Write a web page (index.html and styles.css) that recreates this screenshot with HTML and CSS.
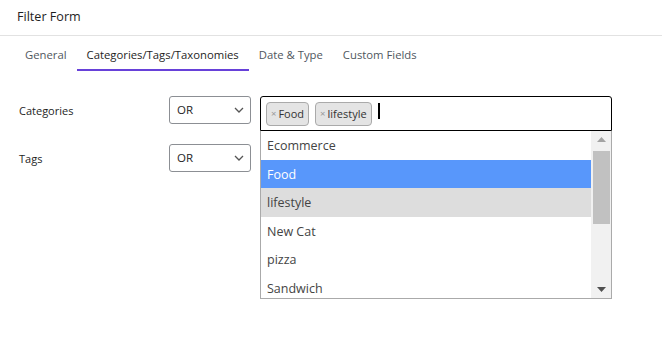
FILE: index.html
```html
<!DOCTYPE html>
<html>
<head>
<meta charset="utf-8">
<link rel="stylesheet" href="styles.css">
</head>
<body>
<div class="header">Filter Form</div>
<div class="tabs">
  <div class="tab">General</div>
  <div class="tab active">Categories/Tags/Taxonomies</div>
  <div class="tab">Date &amp; Type</div>
  <div class="tab">Custom Fields</div>
</div>
<div class="form">
  <div class="row">
    <div class="label">Categories</div>
    <div class="select"><span>OR</span><svg class="chev" width="10" height="6" viewBox="0 0 10 6"><path d="M1 1l4 4 4-4" fill="none" stroke="#555" stroke-width="1.3"/></svg></div>
    <div class="multi-wrap">
      <div class="multi">
        <span class="chip"><span class="x">×</span>Food</span>
        <span class="chip"><span class="x">×</span>lifestyle</span>
        <span class="caret"></span>
      </div>
      <div class="dropdown">
        <ul class="options">
          <li>Ecommerce</li>
          <li class="hl">Food</li>
          <li class="sel">lifestyle</li>
          <li>New Cat</li>
          <li>pizza</li>
          <li>Sandwich</li>
        </ul>
        <div class="scrollbar">
          <div class="arrow up"><svg width="9" height="5" viewBox="0 0 9 5"><path d="M0 5L4.5 0 9 5z" fill="#a3a3a3"/></svg></div>
          <div class="track"><div class="thumb"></div></div>
          <div class="arrow down"><svg width="9" height="5" viewBox="0 0 9 5"><path d="M0 0L4.5 5 9 0z" fill="#505050"/></svg></div>
        </div>
      </div>
    </div>
  </div>
  <div class="row">
    <div class="label">Tags</div>
    <div class="select"><span>OR</span><svg class="chev" width="10" height="6" viewBox="0 0 10 6"><path d="M1 1l4 4 4-4" fill="none" stroke="#555" stroke-width="1.3"/></svg></div>
  </div>
</div>
</body>
</html>
```
FILE: styles.css
```css
* { box-sizing: border-box; }
html, body { height: 100%; }
body {
  margin: 0;
  font-family: "Open Sans", "Noto Sans", sans-serif;
  font-size: 11.3px;
  color: #1e1e1e;
  background: #fff;
}
.header {
  height: 36px;
  padding: 0 17px 2px;
  display: flex;
  align-items: center;
  border-bottom: 1px solid #e2e2e2;
  font-size: 12.6px;
}
.tabs {
  display: flex;
  padding-left: 15px;
}
.tab {
  height: 35px;
  padding: 4px 10px 0;
  display: flex;
  align-items: center;
  color: #50575e;
  border-bottom: 2px solid transparent;
  font-size: 11.3px;
}
.tab.active {
  color: #1e1e1e;
  border-bottom-color: #6741d9;
}
.form {
  padding: 25px 19px 0;
  display: flex;
  flex-direction: column;
  gap: 13px;
}
.row {
  display: flex;
  align-items: flex-start;
}
.label {
  width: 150px;
  line-height: 28px;
  padding-top: 1px;
  font-size: 11px;
}
.select {
  width: 82px;
  height: 28px;
  border: 1px solid #8c8f94;
  border-radius: 3px;
  display: flex;
  align-items: center;
  justify-content: space-between;
  padding: 0 6px 1px 7px;
  font-size: 11.5px;
}
.chev { margin-top: 1px; }
.multi-wrap {
  margin-left: 9px;
  width: 352px;
  position: relative;
  z-index: 5;
}
.multi {
  height: 35px;
  border: 1px solid #000;
  border-radius: 3px 3px 0 0;
  display: flex;
  align-items: center;
  gap: 6px;
  padding: 0 5px;
}
.chip {
  height: 24px;
  background: #e4e4e4;
  border: 1px solid #aaa;
  border-radius: 4px;
  display: flex;
  align-items: center;
  padding: 0 4px;
  font-size: 11px;
  color: #333;
}
.chip .x {
  color: #999;
  font-size: 9.5px;
  margin-right: 2px;
}
.caret {
  width: 2px;
  height: 16px;
  background: #000;
  margin-left: 0;
  margin-top: -6px;
}
.dropdown {
  position: absolute;
  left: 0;
  top: 35px;
  z-index: 10;
  width: 352px;
  height: 168px;
  border: 1px solid #aaa;
  border-top: none;
  background: #fff;
  display: flex;
  overflow: hidden;
}
.options {
  list-style: none;
  margin: 0;
  padding: 0;
  flex: 1;
  overflow: hidden;
  font-size: 12.5px;
  color: #444;
}
.options li {
  height: 28.6px;
  line-height: 29.6px;
  padding-left: 6px;
}
.options li.hl { background: #5897fb; color: #fff; }
.options li.sel { background: #ddd; }
.scrollbar {
  width: 20px;
  background: #f1f1f1;
  display: flex;
  flex-direction: column;
}
.arrow {
  height: 17px;
  display: flex;
  align-items: center;
  justify-content: center;
}
.track {
  flex: 1;
  padding: 3px 1px 0 2px;
}
.thumb {
  height: 73px;
  background: #c1c1c1;
}
```
